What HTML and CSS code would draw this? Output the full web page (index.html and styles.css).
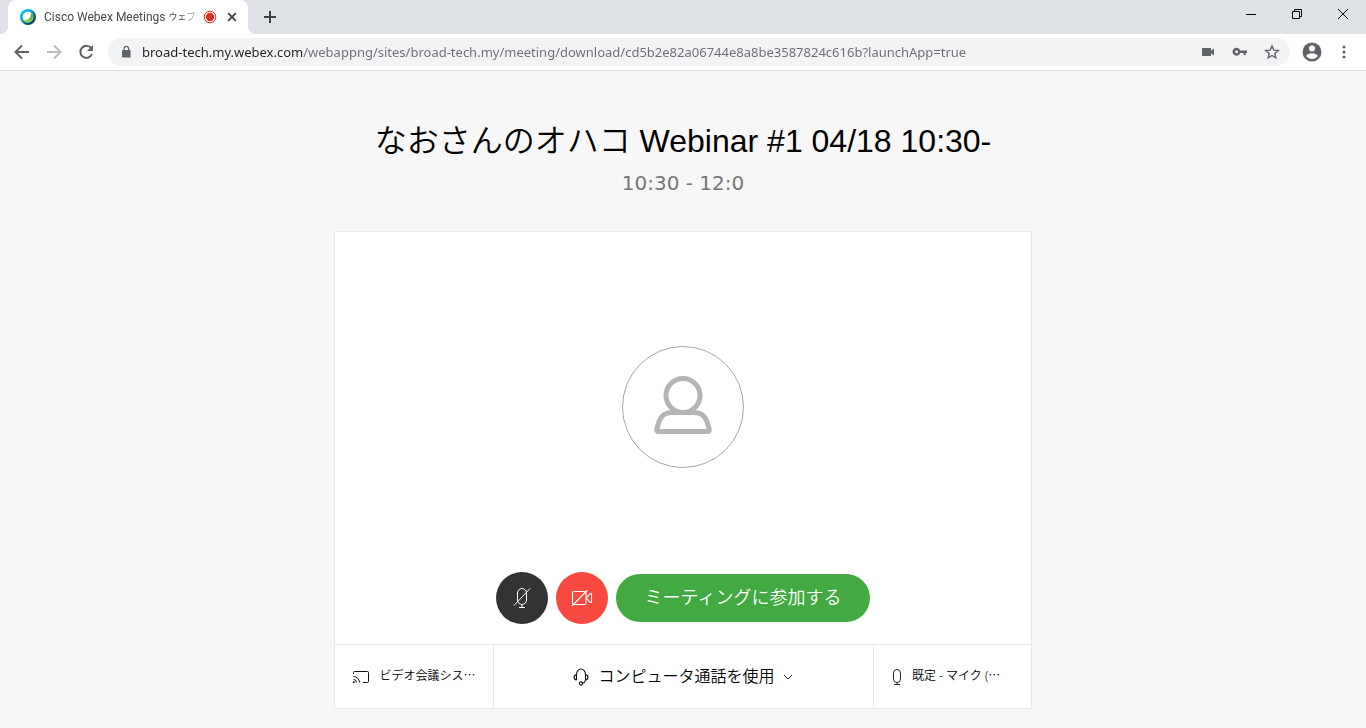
FILE: index.html
```html
<!DOCTYPE html>
<html lang="ja">
<head>
<meta charset="utf-8">
<meta name="viewport" content="width=device-width, initial-scale=1">
<title>Cisco Webex Meetings</title>
<link rel="stylesheet" href="styles.css">
</head>
<body>
<header class="browser">
  <div class="tabstrip">
    <div class="tab">
      <svg class="favicon" width="16" height="16" viewBox="0 0 16 16" aria-hidden="true">
        <defs>
          <linearGradient id="ring" x1="0" y1="0" x2="1" y2="1"><stop offset="0.1" stop-color="#00c8f5"/><stop offset="0.45" stop-color="#0a9bd0"/><stop offset="0.7" stop-color="#07506c"/><stop offset="1" stop-color="#064a5c"/></linearGradient>
          <linearGradient id="leaf" x1="1" y1="0" x2="0" y2="1"><stop offset="0" stop-color="#3da43a"/><stop offset="1" stop-color="#b5e34a"/></linearGradient>
        </defs>
        <circle cx="8" cy="8" r="8" fill="url(#ring)"/>
        <circle cx="8" cy="8" r="5.400" fill="#fff"/>
        <path d="M12.300 4.800c2 3.600-.3 8.600-4.700 8.600-1.800 0-3.300-.9-4.100-2.200 4.200.2 7.600-2 7.600-7.200.5.100.9.400 1.200.8z" fill="url(#leaf)"/>
      </svg>
      <span class="tab-title">Cisco Webex Meetings <span class="kana">ウェブ</span></span>
      <svg class="recording" width="14" height="14" viewBox="0 0 14 14" aria-hidden="true"><circle cx="7" cy="7" r="5.800" fill="none" stroke="#d93025"/><circle cx="7" cy="7" r="4.200" fill="#d93025"/></svg>
      <button class="tab-close" aria-label="Close tab"><svg width="10" height="10" viewBox="0 0 10 10"><path d="M1.200 1.200l7.600 7.600M8.800 1.200L1.200 8.800" stroke="#3c4043" stroke-width="1.800"/></svg></button>
    </div>
    <button class="new-tab" aria-label="New tab"><svg width="12" height="12" viewBox="0 0 12 12"><path d="M6 0v12M0 6h12" stroke="#3c4043" stroke-width="2"/></svg></button>
    <div class="window-controls">
      <button aria-label="Minimize"><svg width="10" height="10" viewBox="0 0 10 10"><path d="M0 5.500h10" stroke="#000"/></svg></button>
      <button aria-label="Restore"><svg width="10" height="10" viewBox="0 0 10 10"><path d="M.5 2.500h7v7h-7zM2.500 2.500v-2h7v7h-2" fill="none" stroke="#000"/></svg></button>
      <button aria-label="Close"><svg width="10" height="10" viewBox="0 0 10 10"><path d="M0 0l10 10M10 0L0 10" stroke="#000"/></svg></button>
    </div>
  </div>
  <div class="toolbar">
    <button class="tool" aria-label="Back"><svg width="16" height="16" viewBox="0 0 16 16"><path d="M15 8H2M8 1.500L1.500 8 8 14.500" fill="none" stroke="#5f6368" stroke-width="2"/></svg></button>
    <button class="tool" aria-label="Forward" disabled><svg width="16" height="16" viewBox="0 0 16 16"><path d="M1 8h13M8 1.500L14.500 8 8 14.500" fill="none" stroke="#babcbe" stroke-width="2"/></svg></button>
    <button class="tool" aria-label="Reload"><svg width="16" height="16" viewBox="0 0 16 16"><path d="M13.300 4.400A6 6 0 1 0 14 10" fill="none" stroke="#5f6368" stroke-width="2"/><path d="M15 1v6H9z" fill="#5f6368"/></svg></button>
    <div class="omnibox">
      <svg width="12" height="14" viewBox="0 0 12 14" aria-hidden="true"><rect x="2" y="5" width="8.600" height="7.600" rx="1" fill="#5f6368"/><path d="M4 5.500V3.600a2.300 2.300 0 0 1 4.600 0v1.900" fill="none" stroke="#5f6368" stroke-width="1.200"/></svg>
      <input class="address" type="text" aria-label="Address" spellcheck="false" value="broad-tech.my.webex.com/webappng/sites/broad-tech.my/meeting/download/cd5b2e82a06744e8a8be3587824c616b?launchApp=true">
      <button class="omni-action" aria-label="Camera"><svg width="16" height="16" viewBox="0 0 16 16"><path d="M2 4.500q0-.5.500-.5h8q.5 0 .5.500v2.300l3-2.300v7l-3-2.300v2.300q0 .5-.5.500h-8q-.5 0-.5-.5z" fill="#5f6368"/></svg></button>
      <button class="omni-action" aria-label="Passwords"><svg width="16" height="16" viewBox="0 0 16 16"><path d="M8.300 6.500H15v2.500h-1.200V11h-2.300V9H8.300a4 4 0 1 1 0-2.500zM4.600 6.300a1.500 1.500 0 1 0 0 3 1.500 1.500 0 0 0 0-3z" fill="#5f6368" fill-rule="evenodd"/></svg></button>
      <button class="omni-action" aria-label="Bookmark"><svg width="16" height="16" viewBox="0 0 16 16"><path d="M8 2l1.700 4.100 4.500.4-3.400 2.900 1 4.400L8 11.500l-3.800 2.300 1-4.400-3.400-2.900 4.500-.4z" fill="none" stroke="#5f6368" stroke-width="1.400"/></svg></button>
    </div>
    <button class="profile" aria-label="Profile"><svg width="20" height="20" viewBox="0 0 20 20"><circle cx="10" cy="10" r="9.500" fill="#5f6368"/><circle cx="10" cy="6.600" r="3" fill="#fff"/><path d="M4.200 14c.7-2 3.600-2.800 5.800-2.800s5.100.8 5.800 2.800c-1.300 1.900-3.400 3-5.800 3s-4.500-1.100-5.800-3z" fill="#fff"/></svg></button>
    <button class="menu" aria-label="Menu"><svg width="4" height="14" viewBox="0 0 4 14" fill="#5f6368"><circle cx="2" cy="2" r="1.500"/><circle cx="2" cy="7" r="1.500"/><circle cx="2" cy="12" r="1.500"/></svg></button>
  </div>
</header>
<main class="page">
  <h1 class="title">なおさんのオハコ Webinar #1 04/18 10:30-</h1>
  <p class="time">10:30 - 12:0</p>
  <section class="panel">
    <div class="preview">
      <div class="avatar">
        <svg width="60" height="64" viewBox="0 -3 60 64" fill="none" stroke="#b2b4b5" stroke-width="5" aria-hidden="true"><circle cx="30" cy="17.500" r="17"/><path d="M18.500 34.500h23c7 0 10.500 3.500 12.500 9l2.200 7.500q.7 2.500-2 2.500H5.800q-2.700 0-2-2.500L6 43.500c2-5.500 5.500-9 12.500-9z"/></svg>
      </div>
      <div class="controls">
        <button class="round mic" aria-label="Unmute"><svg width="20" height="22" viewBox="0 0 20 22" fill="none" stroke="#fff" stroke-width="1"><rect x="5.500" y="1.500" width="9" height="16" rx="4.500"/><path d="M10 17.500v3M7 20.500h6M2 18.500L18 1.500"/></svg></button>
        <button class="round camera" aria-label="Start video"><svg width="22" height="18" viewBox="0 0 22 18" fill="none" stroke="#fff" stroke-width="1.100"><rect x="1.500" y="2.500" width="13.500" height="13" rx="1.500"/><path d="M15 9l4.200-4.300q1.300-.8 1.300.6v7.400q0 1.400-1.300.6zM1 17L16.500 1"/></svg></button>
        <button class="join">ミーティングに参加する</button>
      </div>
    </div>
    <div class="settings">
      <button class="setting side">
        <svg width="18" height="14" viewBox="0 0 18 14" fill="none" stroke="#111" aria-hidden="true"><path d="M1.500 4V2.500q0-1 1-1h13q1 0 1 1v9q0 1-1 1H11M1.500 6.500a6 6 0 0 1 6 6M1.500 9.500a3 3 0 0 1 3 3"/><circle cx="1.800" cy="12.200" r=".6" fill="#111"/></svg>
        <span>ビデオ会議シス⋯</span>
      </button>
      <button class="setting audio">
        <svg width="18" height="18" viewBox="0 0 18 18" fill="none" stroke="#111" stroke-width="1.100" aria-hidden="true"><path d="M4.500 12V6.500a4.500 5.500 0 0 1 9 0V12M4.500 6.500a3 2.800 0 0 0 0 5.500M13.500 6.500a3 2.800 0 0 1 0 5.500q-.5 2.800-3 3.300"/><circle cx="9" cy="15.500" r="1.600"/></svg>
        <span>コンピュータ通話を使用</span>
        <svg width="10" height="6" viewBox="0 0 10 6" fill="none" stroke="#222" aria-hidden="true"><path d="M1 1l4 4 4-4"/></svg>
      </button>
      <button class="setting side microphone">
        <svg width="12" height="18" viewBox="0 0 12 18" fill="none" stroke="#222" aria-hidden="true"><rect x="2.500" y="1.500" width="7" height="13" rx="3.500"/><path d="M6 14.500v2M3 16.500h6"/></svg>
        <span>既定 - マイク (⋯</span>
      </button>
    </div>
  </section>
</main>
</body>
</html>
```
FILE: styles.css
```css
* { box-sizing: border-box; }
body {
  margin: 0;
  min-height: 100vh;
  background: #f7f7f7;
  color: #000;
  font-family: "Liberation Sans", "Noto Sans CJK JP", sans-serif;
}
button {
  display: flex;
  align-items: center;
  justify-content: center;
  flex: none;
  margin: 0;
  padding: 0;
  border: 0;
  background: none;
  color: inherit;
  font: inherit;
}
svg { display: block; flex: none; }

.browser { background: #fff; border-bottom: 1px solid #dadce0; }
.tabstrip {
  display: flex;
  height: 34px;
  padding-left: 8px;
  background: #dee1e6;
}
.tab {
  position: relative;
  display: flex;
  align-items: center;
  width: 240px;
  padding: 0 10px 0 12px;
  border-radius: 8px 8px 0 0;
  background: #fff;
}
.tab::before, .tab::after {
  content: "";
  position: absolute;
  bottom: 0;
  width: 8px;
  height: 8px;
}
.tab::before { right: 100%; background: radial-gradient(circle at 0 0, #dee1e6 8px, #fff 8px); }
.tab::after { left: 100%; background: radial-gradient(circle at 100% 0, #dee1e6 8px, #fff 8px); }
.tab-title {
  flex: 1;
  display: flex;
  min-width: 0;
  margin: 0 6px 0 8px;
  white-space: pre;
  color: #45494d;
  font: 12px/18px Roboto, "Noto Sans CJK JP", sans-serif;
  mask-image: linear-gradient(to right, #000 calc(100% - 16px), rgba(0, 0, 0, 0.3));
}
.kana { font-size: 9px; }
.recording { margin-right: 9px; }
.tab-close { width: 12px; height: 16px; }
.new-tab { width: 28px; margin-left: 8px; }
.window-controls { display: flex; margin-left: auto; }
.window-controls button { width: 46px; height: 28px; }

.toolbar {
  display: flex;
  align-items: center;
  height: 36px;
  padding: 0 10px 0 6px;
}
.tool { width: 32px; height: 28px; }
.omnibox {
  display: flex;
  align-items: center;
  flex: 1;
  min-width: 0;
  height: 28px;
  margin: 0 8px 0 6px;
  padding: 0 2px 0 12px;
  border-radius: 14px;
  background: #f1f3f4;
}
.address {
  flex: 1;
  min-width: 0;
  height: 28px;
  margin-left: 10px;
  padding: 0;
  border: 0;
  outline: 0;
  color: #5f6368;
  font: 13px/28px "Noto Sans", sans-serif;
  background: linear-gradient(to right, #202124 161px, #6a6e72 161px);
  background-clip: text;
  -webkit-text-fill-color: transparent;
}
.omni-action { width: 32px; height: 28px; }
.profile { width: 28px; height: 28px; }
.menu { width: 24px; height: 28px; margin-left: 6px; }

.page { padding: 48px 16px 18px; text-align: center; }
.title {
  margin: 0;
  font-size: 32px;
  font-weight: 350;
  line-height: 44px;
}
.time {
  margin: 4px 0 0;
  color: #757575;
  font: 20px/32px "DejaVu Sans", sans-serif;
}
.panel {
  max-width: 698px;
  margin: 32px auto 0;
  border: 1px solid #e8e8e8;
  background: #fff;
}
.preview {
  display: flex;
  flex-direction: column;
  align-items: center;
  padding: 114px 16px 20px;
}
.avatar {
  display: flex;
  align-items: center;
  justify-content: center;
  width: 122px;
  height: 122px;
  border: 1px solid #a8a8a8;
  border-radius: 50%;
}
.controls { display: flex; align-items: center; gap: 8px; margin-top: 104px; }
.round { width: 52px; height: 52px; border-radius: 50%; }
.mic { background: #333; }
.camera { background: #f7493f; }
.join {
  height: 48px;
  padding: 0 28px 4px;
  min-width: 254px;
  border-radius: 24px;
  background: #43a942;
  color: #fff;
  font-size: 18px;
  font-weight: 350;
}
.settings {
  display: grid;
  grid-template-columns: 158px 1fr 158px;
  height: 64px;
  border-top: 1px solid #e8e8e8;
}
.setting { font-weight: 350; white-space: nowrap; min-width: 0; }
.setting span { padding-bottom: 4px; }
.setting + .setting { border-left: 1px solid #e8e8e8; }
.side { gap: 9px; font-size: 12px; }
.audio { gap: 8px; padding-right: 2px; font-size: 16px; }
.microphone {
  justify-content: flex-start;
  padding-left: 17px;
  font-family: "Noto Sans", "Noto Sans CJK JP", sans-serif;
}
```
